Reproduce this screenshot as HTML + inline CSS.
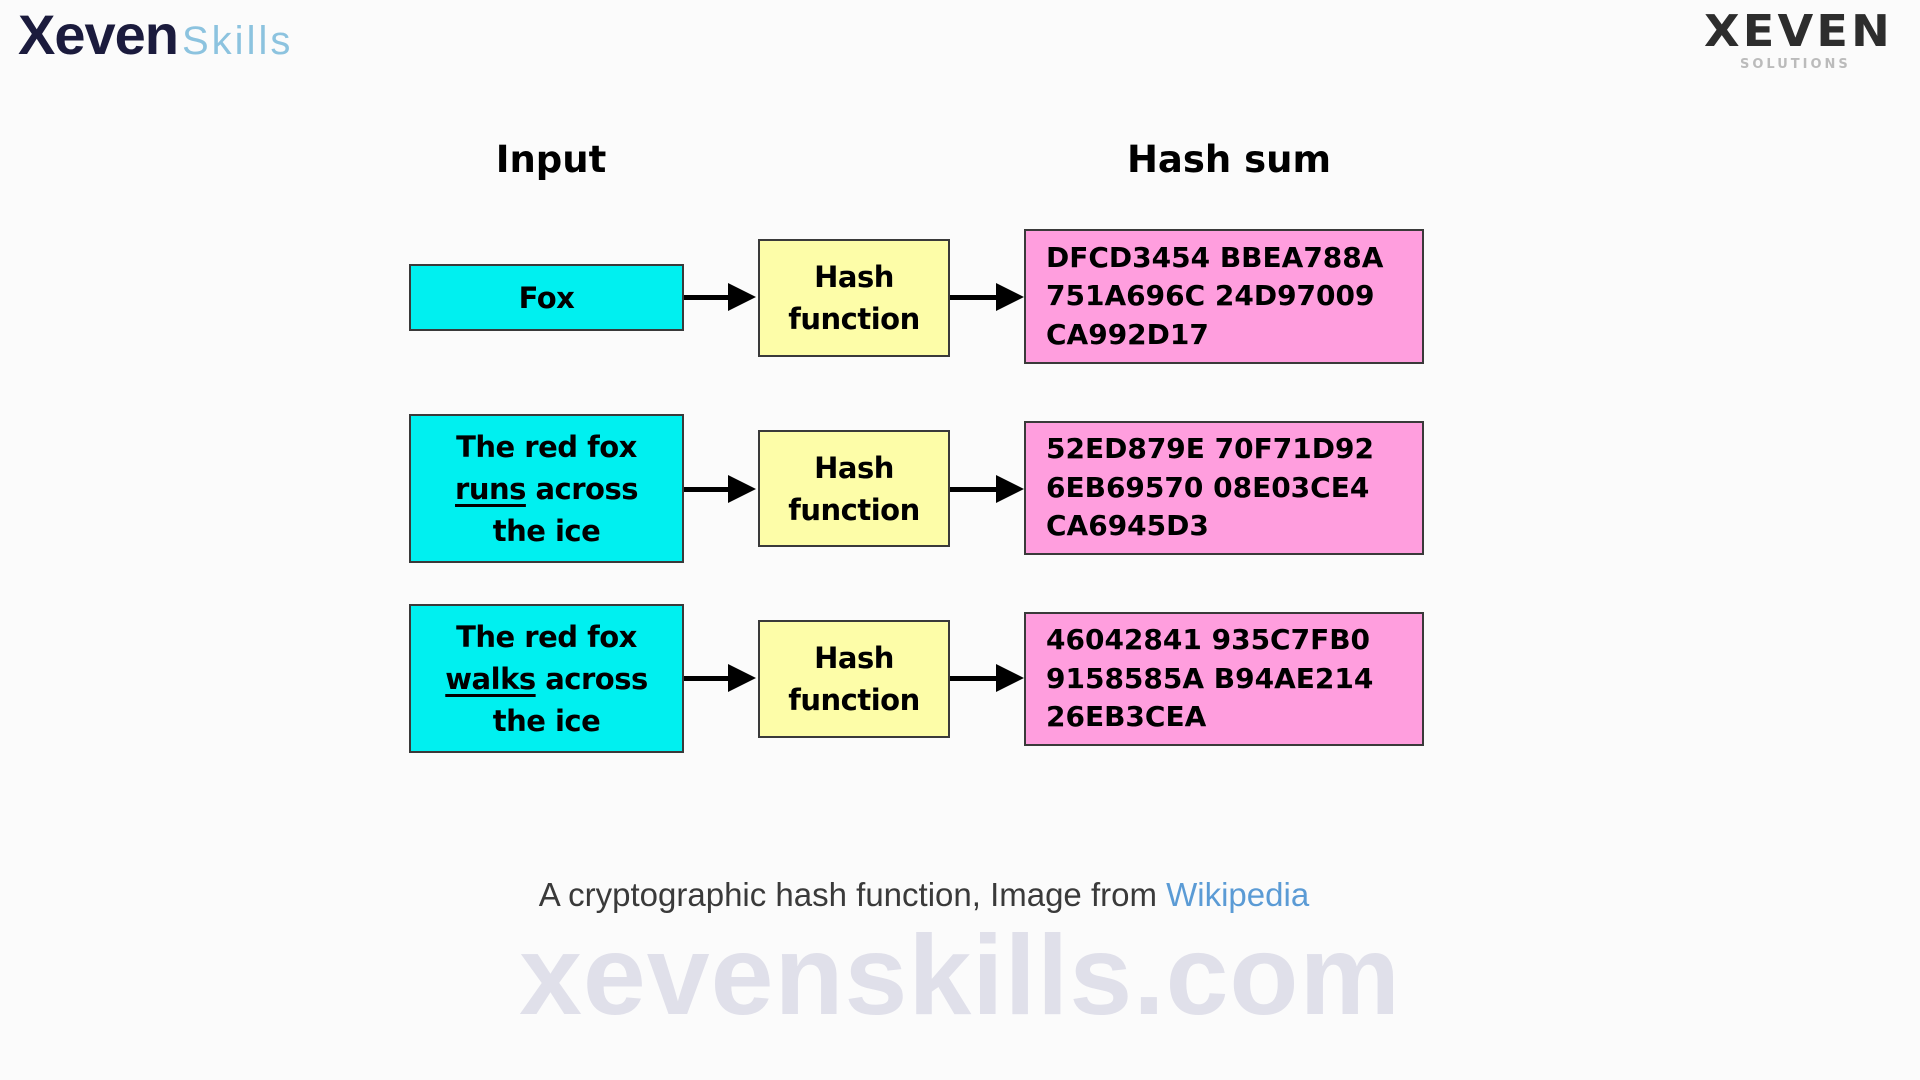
<!DOCTYPE html>
<html><head><meta charset="utf-8"><style>
html,body{margin:0;padding:0}
body{width:1920px;height:1080px;background:#fbfbfb;position:relative;overflow:hidden;font-family:"DejaVu Sans",sans-serif}
.b{position:absolute;box-sizing:border-box;border:2px solid #3a3a3a;display:flex;align-items:center;justify-content:center;text-align:center;font-weight:bold;color:#000;font-size:29px;line-height:42px;letter-spacing:-0.5px}
.b>div{white-space:nowrap}
.c{background:#00f0f0}
.y{background:#fdfda8}
.p{background:#ff9ede;justify-content:flex-start;text-align:left;padding-left:20px;line-height:38.5px;font-size:28px;letter-spacing:0}
.h{position:absolute;font-weight:bold;font-size:37px;transform:translateX(-50%);color:#000}
.ar{position:absolute;height:5px;background:#000}
.ah{position:absolute;width:0;height:0;border-top:14px solid transparent;border-bottom:14px solid transparent;border-left:28px solid #000}
u{text-decoration-thickness:3px;text-underline-offset:5px}
</style></head><body>
<div style="position:absolute;left:18px;top:2px;font-family:'Liberation Sans',sans-serif;font-size:56px;font-weight:bold;color:#1b1b3d;letter-spacing:-1px">Xeven<span style="font-size:40px;font-weight:normal;color:#8cc3df;letter-spacing:3px;margin-left:4px">Skills</span></div>
<div style="position:absolute;left:1704px;top:6px;font-family:'DejaVu Sans',sans-serif;font-size:44px;font-weight:bold;color:#2d2d2d;letter-spacing:3px;transform:scaleX(1.05);transform-origin:left">XEVEN</div>
<div style="position:absolute;left:1740px;top:57px;font-family:'DejaVu Sans',sans-serif;font-size:13px;font-weight:bold;color:#bbb;letter-spacing:3px">SOLUTIONS</div>

<div class="h" style="left:551px;top:138px">Input</div>
<div class="h" style="left:1229px;top:138px">Hash sum</div>

<div class="b c" style="left:409px;top:264px;width:275px;height:67px"><div>Fox</div></div>
<div class="b c" style="left:409px;top:414px;width:275px;height:149px"><div>The red fox<br><u>runs</u> across<br>the ice</div></div>
<div class="b c" style="left:409px;top:604px;width:275px;height:149px"><div>The red fox<br><u>walks</u> across<br>the ice</div></div>

<div class="b y" style="left:758px;top:239px;width:192px;height:118px"><div>Hash<br>function</div></div>
<div class="b y" style="left:758px;top:430px;width:192px;height:117px"><div>Hash<br>function</div></div>
<div class="b y" style="left:758px;top:620px;width:192px;height:118px"><div>Hash<br>function</div></div>

<div class="b p" style="left:1024px;top:229px;width:400px;height:135px"><div>DFCD3454 BBEA788A<br>751A696C 24D97009<br>CA992D17</div></div>
<div class="b p" style="left:1024px;top:421px;width:400px;height:134px"><div>52ED879E 70F71D92<br>6EB69570 08E03CE4<br>CA6945D3</div></div>
<div class="b p" style="left:1024px;top:612px;width:400px;height:134px"><div>46042841 935C7FB0<br>9158585A B94AE214<br>26EB3CEA</div></div>

<div class="ar" style="left:684px;top:295px;width:45px"></div><div class="ah" style="left:728px;top:283px"></div>
<div class="ar" style="left:950px;top:295px;width:47px"></div><div class="ah" style="left:996px;top:283px"></div>
<div class="ar" style="left:684px;top:487px;width:45px"></div><div class="ah" style="left:728px;top:475px"></div>
<div class="ar" style="left:950px;top:487px;width:47px"></div><div class="ah" style="left:996px;top:475px"></div>
<div class="ar" style="left:684px;top:676px;width:45px"></div><div class="ah" style="left:728px;top:664px"></div>
<div class="ar" style="left:950px;top:676px;width:47px"></div><div class="ah" style="left:996px;top:664px"></div>

<div style="position:absolute;left:409px;top:876px;width:1030px;text-align:center;font-family:'Liberation Sans',sans-serif;font-size:33px;color:#3a3a3a;white-space:nowrap">A cryptographic hash function, Image from <span style="color:#5b9bd5">Wikipedia</span></div>
<div style="position:absolute;left:355px;top:910px;width:1210px;text-align:center;font-family:'Liberation Sans',sans-serif;font-size:113px;font-weight:bold;color:#e0e0ea;white-space:nowrap;letter-spacing:1px">xevenskills.com</div>
</body></html>
